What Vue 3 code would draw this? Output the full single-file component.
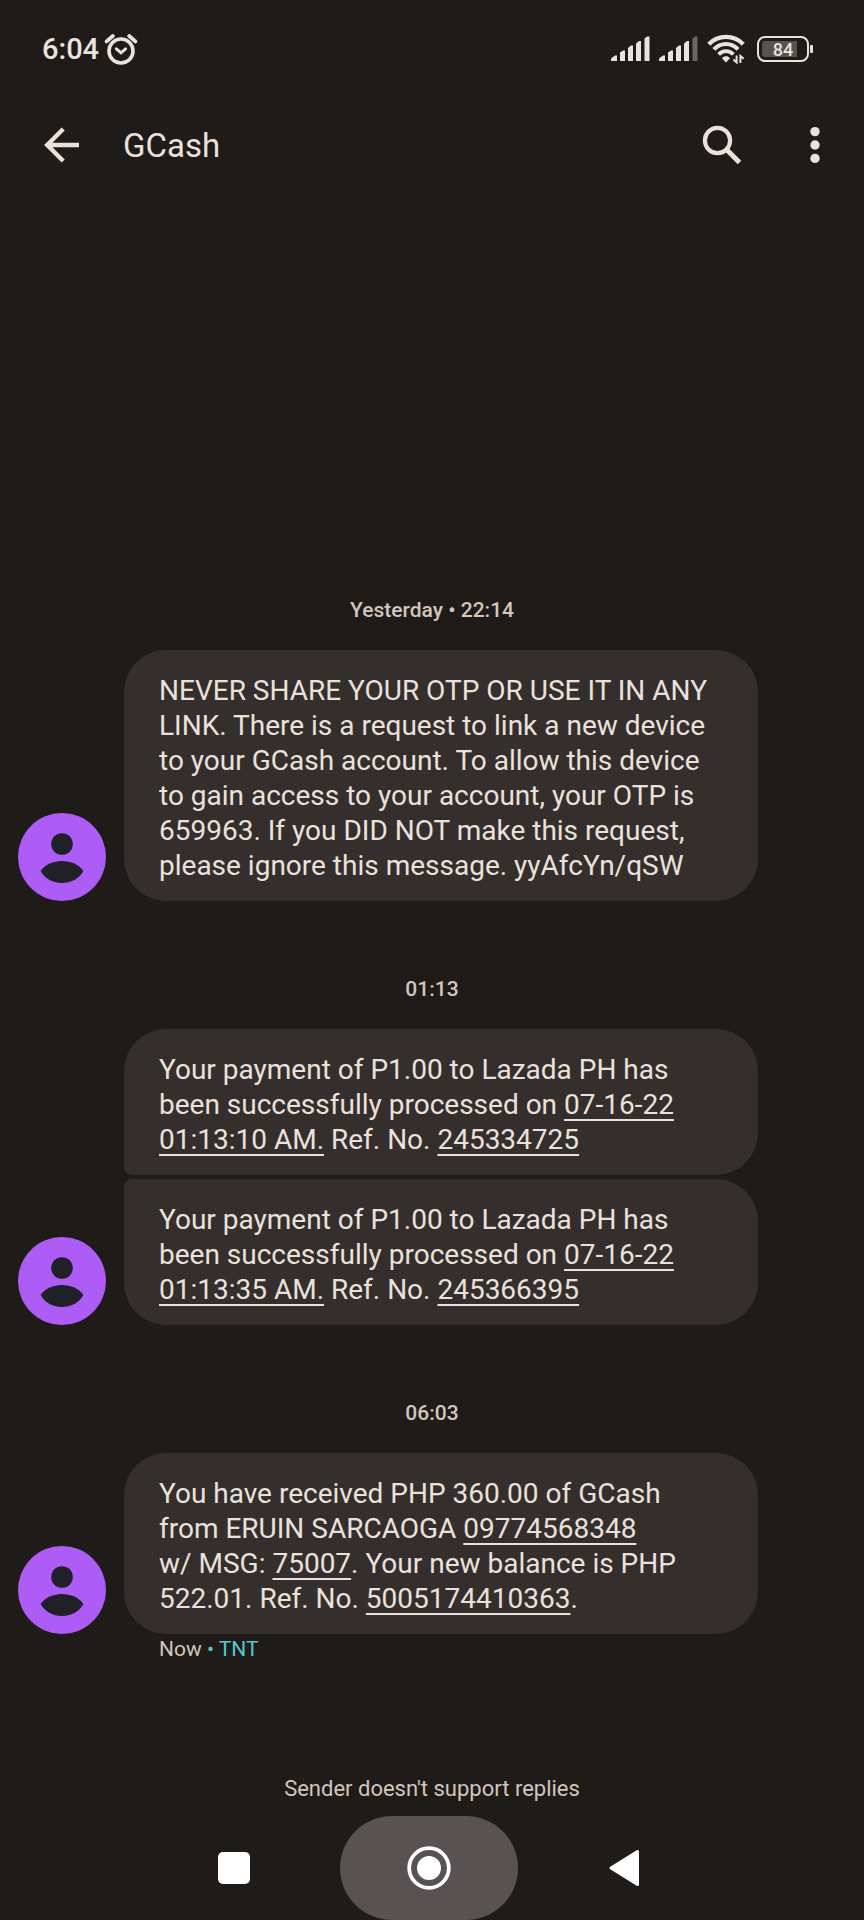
<template>
  <div class="screen">
    <div class="status">
      <span class="clock">6:04</span>
      <svg class="alarm" width="34" height="32" viewBox="0 0 34 32" fill="none" stroke="#e9e3df">
        <circle cx="17" cy="18" r="12" stroke-width="3.6" />
        <path d="M2.6 8.4 8.8 3M31.4 8.4 25.2 3" stroke-width="3.8" stroke-linecap="round" />
        <path d="M12.4 15.8 17 19.8 21.6 15.8" stroke-width="3" stroke-linecap="round" />
      </svg>

      <div class="status-icons">
        <svg v-for="sim in sims" :key="sim.id" width="40" height="26" viewBox="0 0 40 26">
          <path
            v-for="(bar, i) in bars"
            :key="i"
            :d="bar"
            :fill="i < sim.level ? '#e9e3df' : '#6b6663'"
          />
        </svg>
        <svg class="wifi" width="38" height="30" viewBox="0 0 38 30" fill="none" stroke="#e9e3df">
          <path d="M1.8 10.2C11 .4 27 .4 36.2 10.2" stroke-width="4.4" />
          <path d="M6.9 15.4C13.6 8.2 24.4 8.2 31.1 15.4" stroke-width="4.2" />
          <path d="M11.6 20.4C15.6 16 22.4 16 26.4 20.4" stroke-width="3.8" />
          <path d="M19 28.4 15 24.2C17.2 21.6 20.8 21.6 23 24.2Z" fill="#e9e3df" stroke="none" />
          <path d="M29.6 21.5V28.4L26.4 25.6M33.4 29V22L36.6 24.8" stroke-width="2" />
        </svg>
        <div class="battery"><span class="charge">84</span></div>
      </div>
    </div>

    <header class="bar">
      <button class="icon-btn" aria-label="Back">
        <svg width="38" height="38" viewBox="0 0 38 38" fill="none" stroke="#ebe1dc" stroke-width="4.4">
          <path d="M36 19H4.6M20.2 3 4.2 19 20.2 35" />
        </svg>
      </button>
      <h1>GCash</h1>
      <button class="icon-btn search" aria-label="Search">
        <svg width="40" height="40" viewBox="0 0 40 40" fill="none" stroke="#ebe1dc">
          <circle cx="15.5" cy="15.5" r="12.6" stroke-width="4.2" />
          <path d="M25 25 37.5 37.5" stroke-width="5" />
        </svg>
      </button>
      <button class="icon-btn more" aria-label="More options">
        <svg width="10" height="38" viewBox="0 0 10 38" fill="#ebe1dc">
          <circle cx="5" cy="5.6" r="4.7" />
          <circle cx="5" cy="19" r="4.7" />
          <circle cx="5" cy="32.4" r="4.7" />
        </svg>
      </button>
    </header>

    <main class="chat">
      <section v-for="group in groups" :key="group.time" class="group">
        <p class="time">{{ group.time }}</p>
        <div class="row">
          <svg class="avatar" width="88" height="88" viewBox="0 0 88 88">
            <circle cx="44" cy="44" r="44" fill="#ae5cf6" />
            <circle cx="44" cy="31" r="10.8" fill="#1f2028" />
            <path d="M22.6 58C31 44.6 57 44.6 65.4 58C57 74 31 74 22.6 58Z" fill="#1f2028" />
          </svg>
          <div class="bubbles">
            <div v-for="(message, m) in group.messages" :key="m" class="bubble">
              <p v-for="(line, l) in message" :key="l">
                <template v-for="(part, p) in line" :key="p">
                  <a v-if="part.tap" href="#">{{ part.tap }}</a>
                  <template v-else>{{ part }}</template>
                </template>
              </p>
            </div>
          </div>
        </div>
      </section>
      <p class="meta">Now <span class="sim">• TNT</span></p>
    </main>

    <p class="notice">Sender doesn't support replies</p>

    <nav class="nav">
      <button class="nav-btn" aria-label="Recent apps">
        <svg width="32" height="32" viewBox="0 0 32 32" fill="#fff"><rect width="32" height="32" rx="5" /></svg>
      </button>
      <button class="nav-btn home" aria-label="Home">
        <svg width="44" height="44" viewBox="0 0 44 44">
          <circle cx="22" cy="22" r="19.8" fill="none" stroke="#fff" stroke-width="3.8" />
          <circle cx="22" cy="22" r="12" fill="#fff" />
        </svg>
      </button>
      <button class="nav-btn" aria-label="Back">
        <svg width="32" height="38" viewBox="0 0 32 38">
          <path d="M3 19 29.5 2.5V35.5Z" fill="#fff" stroke="#fff" stroke-width="3" stroke-linejoin="round" />
        </svg>
      </button>
    </nav>
  </div>
</template>

<script setup>
const sims = [
  { id: 1, level: 5 },
  { id: 2, level: 4 }
]

// signal bars, shortest first
const bars = [
  'M0 25V22.5L4 19.5H6V25Z',
  'M9 25V16.5L12 14.5H14V25Z',
  'M17 25V12L20 9.5H22V25Z',
  'M25 25V7.5L28 5H30V25Z',
  'M33.5 25V2.5L36 .5H38.5V25Z'
]

// each message is a list of lines, "tap" marks the tappable parts
const groups = [
  {
    time: 'Yesterday • 22:14',
    messages: [
      [
        ['NEVER SHARE YOUR OTP OR USE IT IN ANY'],
        ['LINK. There is a request to link a new device'],
        ['to your GCash account. To allow this device'],
        ['to gain access to your account, your OTP is'],
        ['659963. If you DID NOT make this request,'],
        ['please ignore this message. yyAfcYn/qSW']
      ]
    ]
  },
  {
    time: '01:13',
    messages: [
      [
        ['Your payment of P1.00 to Lazada PH has'],
        ['been successfully processed on ', { tap: '07-16-22' }],
        [{ tap: '01:13:10 AM.' }, ' Ref. No. ', { tap: '245334725' }]
      ],
      [
        ['Your payment of P1.00 to Lazada PH has'],
        ['been successfully processed on ', { tap: '07-16-22' }],
        [{ tap: '01:13:35 AM.' }, ' Ref. No. ', { tap: '245366395' }]
      ]
    ]
  },
  {
    time: '06:03',
    messages: [
      [
        ['You have received PHP 360.00 of GCash'],
        ['from ERUIN SARCAOGA ', { tap: '09774568348' }],
        ['w/ MSG: ', { tap: '75007' }, '. Your new balance is PHP'],
        ['522.01. Ref. No. ', { tap: '5005174410363' }, '.']
      ]
    ]
  }
]
</script>

<style>
body {
  margin: 0;
  background: #1f1b18;
}
</style>

<style scoped>
.screen {
  display: flex;
  flex-direction: column;
  min-height: 100vh;
  background: #1f1b18;
  color: #ebe1dc;
  font-family: Roboto, "Liberation Sans", sans-serif;
}

h1,
p {
  margin: 0;
  font-weight: 400;
}

button {
  padding: 0;
  border: none;
  background: none;
  cursor: pointer;
}

svg {
  display: block;
}

.status {
  display: flex;
  align-items: center;
  height: 97px;
  padding: 0 51px 0 42px;
  color: #e9e3df;
}

.clock {
  font-size: 29px;
  font-weight: 500;
}

.alarm {
  margin-left: 5px;
}

.status-icons {
  display: flex;
  align-items: center;
  gap: 8px;
  margin-left: auto;
}

.battery {
  position: relative;
  display: flex;
  box-sizing: border-box;
  width: 52px;
  height: 26px;
  margin: 0 4px;
  padding: 3px;
  border: 2px solid #e9e3df;
  border-radius: 8px;
}

.battery::after {
  content: "";
  position: absolute;
  top: 7px;
  right: -6px;
  width: 3px;
  height: 8px;
  border-radius: 1px;
  background: #e9e3df;
}

.charge {
  flex: 1;
  border-radius: 3px;
  background: linear-gradient(90deg, #57534f 84%, transparent 84%);
  font-size: 18px;
  font-weight: 500;
  line-height: 17px;
  text-align: center;
}

.bar {
  display: flex;
  align-items: center;
  height: 96px;
  padding: 0 44px 0 43px;
}

h1 {
  margin-left: 42px;
  font-size: 33px;
}

.search {
  margin-left: auto;
}

.more {
  margin-left: 68px;
}

.chat {
  display: flex;
  flex: 1;
  flex-direction: column;
  justify-content: flex-end;
  padding-bottom: 110px;
}

.group + .group {
  margin-top: 73px;
}

.time {
  margin-bottom: 25px;
  color: #d2c6be;
  font-size: 21px;
  font-weight: 500;
  line-height: 30px;
  text-align: center;
}

.row {
  display: flex;
  align-items: flex-end;
  gap: 18px;
  padding: 0 106px 0 18px;
}

.avatar {
  flex: none;
}

.bubbles {
  display: flex;
  flex: 1;
  flex-direction: column;
  gap: 4px;
}

.bubble {
  padding: 23px 20px 18px 35px;
  border-radius: 42px;
  background: #342f2c;
  font-size: 28px;
  line-height: 35px;
  white-space: pre;
}

.bubble:not(:last-child) {
  border-bottom-left-radius: 8px;
}

.bubble:not(:first-child) {
  border-top-left-radius: 8px;
}

.bubble a {
  color: inherit;
  text-decoration-thickness: 2px;
  text-decoration-skip-ink: none;
  text-underline-offset: 5px;
}

.meta {
  padding-left: 159px;
  color: #d2c6be;
  font-size: 21px;
  line-height: 30px;
}

.sim {
  color: #57c9cc;
}

.notice {
  margin-bottom: 12px;
  color: #d2c6be;
  font-size: 22px;
  line-height: 30px;
  text-align: center;
}

.nav {
  display: flex;
  justify-content: center;
  gap: 17px;
  padding-right: 6px;
}

.nav-btn {
  display: flex;
  align-items: center;
  justify-content: center;
  width: 178px;
  height: 104px;
}

.home {
  border-radius: 52px;
  background: #585352;
}
</style>
